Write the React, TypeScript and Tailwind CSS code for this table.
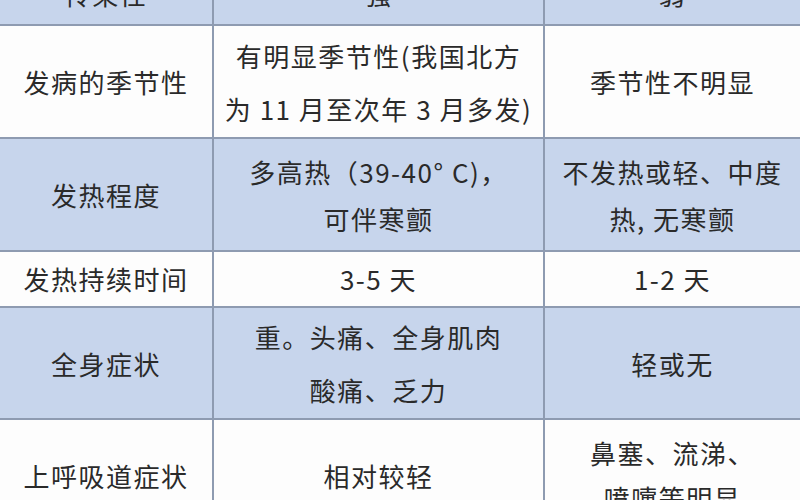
// 流感 vs 普通感冒 对比表（截图中间一段）
const ROWS: {
  bg: "blue" | "white";
  h: string;
  lead: string;
  cells: string[][];
}[] = [
  { bg: "blue", h: "h-[60px]", lead: "leading-[50px]", cells: [["传染性"], ["强"], ["弱"]] },
  {
    bg: "white",
    h: "h-[111px]",
    lead: "leading-[53px]",
    cells: [["发病的季节性"], ["有明显季节性(我国北方", "为 11 月至次年 3 月多发)"], ["季节性不明显"]],
  },
  {
    bg: "blue",
    h: "h-[111px]",
    lead: "leading-[47px]",
    cells: [["发热程度"], ["多高热（39-40° C)，", "可伴寒颤"], ["不发热或轻、中度", "热, 无寒颤"]],
  },
  { bg: "white", h: "h-[54px]", lead: "leading-[50px]", cells: [["发热持续时间"], ["3-5 天"], ["1-2 天"]] },
  {
    bg: "blue",
    h: "h-[110px]",
    lead: "leading-[53px]",
    cells: [["全身症状"], ["重。头痛、全身肌肉", "酸痛、乏力"], ["轻或无"]],
  },
  {
    bg: "white",
    h: "h-[110px]",
    lead: "leading-[45px]",
    cells: [["上呼吸道症状"], ["相对较轻"], ["鼻塞、流涕、", "喷嚏等明显"]],
  },
];

export default function App() {
  return (
    <div className="w-[800px] h-[500px] overflow-hidden bg-white">
      <div
        className="-mt-[36px] grid grid-cols-[212px_329px_1fr] gap-[2px] bg-[#8e9bb1] text-[#2a2a2a] text-[26px] tracking-[1.5px]"
        style={{ fontFamily: '"Noto Sans CJK SC", "Noto Sans", sans-serif' }}
      >
        {ROWS.map((row, r) =>
          row.cells.map((lines, c) => (
            <div
              key={`${r}-${c}`}
              className={`${row.h} ${row.lead} flex flex-col items-center justify-center text-center whitespace-nowrap ${
                row.bg === "blue" ? "bg-[#c7d5ec]" : "bg-[#fdfdfd]"
              }`}
            >
              {lines.map((t, i) => (
                <span key={i}>{t}</span>
              ))}
            </div>
          )),
        )}
      </div>
    </div>
  );
}
